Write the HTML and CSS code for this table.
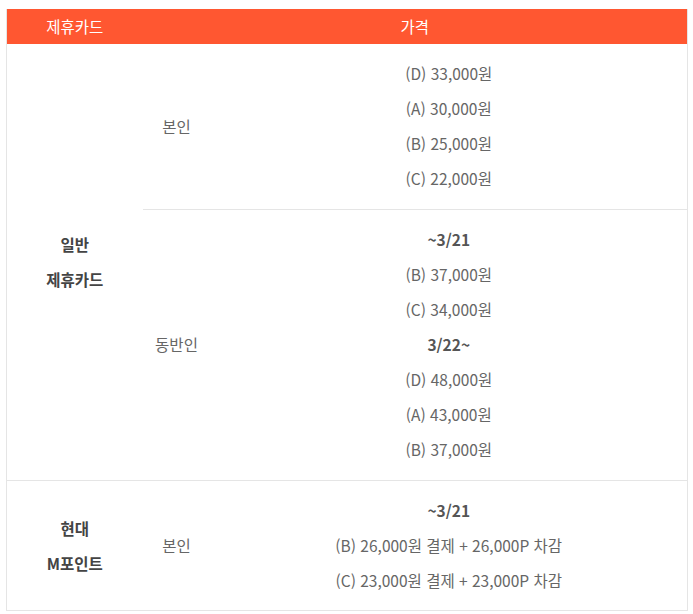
FILE: index.html
```html
<!DOCTYPE html>
<html lang="ko">
<head>
<meta charset="utf-8">
<link rel="stylesheet" href="styles.css">
</head>
<body>
<table class="price-table">
  <colgroup>
    <col class="c1"><col class="c2"><col class="c3">
  </colgroup>
  <thead>
    <tr>
      <th>제휴카드</th>
      <th colspan="2">가격</th>
    </tr>
  </thead>
  <tbody>
    <tr>
      <td rowspan="2" class="card"><p>일반</p><p>제휴카드</p></td>
      <td class="who">본인</td>
      <td class="price"><p>(D) 33,000원</p><p>(A) 30,000원</p><p>(B) 25,000원</p><p>(C) 22,000원</p></td>
    </tr>
    <tr>
      <td class="who">동반인</td>
      <td class="price"><p class="b">~3/21</p><p>(B) 37,000원</p><p>(C) 34,000원</p><p class="b">3/22~</p><p>(D) 48,000원</p><p>(A) 43,000원</p><p>(B) 37,000원</p></td>
    </tr>
    <tr class="last">
      <td class="card"><p>현대</p><p>M포인트</p></td>
      <td class="who">본인</td>
      <td class="price"><p class="b">~3/21</p><p>(B) 26,000원 결제 + 26,000P 차감</p><p>(C) 23,000원 결제 + 23,000P 차감</p></td>
    </tr>
  </tbody>
</table>
</body>
</html>
```

FILE: styles.css
```css
html, body {
  margin: 0;
  padding: 0;
  background: #fff;
}
body {
  padding: 9px 5px 0 6px;
  font-family: "Noto Sans CJK KR", "Noto Sans", sans-serif;
  font-size: 15.5px;
  color: #666;
}
.price-table {
  width: 682px;
  border-collapse: collapse;
  table-layout: fixed;
  border: 1px solid #e5e5e5;
  border-top: none;
}
.c1 { width: 136px; }
.c2 { width: 68px; }
.price-table th {
  background: #ff5731;
  color: #fff;
  font-weight: 400;
  height: 35px;
  padding: 0;
  text-align: center;
  line-height: 35px;
}
.price-table td {
  border-bottom: 1px solid #e5e5e5;
  padding: 12px 0 13px;
  text-align: center;
  vertical-align: middle;
  line-height: 35px;
}
.price-table .last td {
  padding-bottom: 12px;
}
.price-table p {
  margin: 0;
}
.card {
  font-weight: 700;
  color: #444;
}
.who {
  color: #666;
}
.price .b {
  font-weight: 700;
  color: #555;
}
```
